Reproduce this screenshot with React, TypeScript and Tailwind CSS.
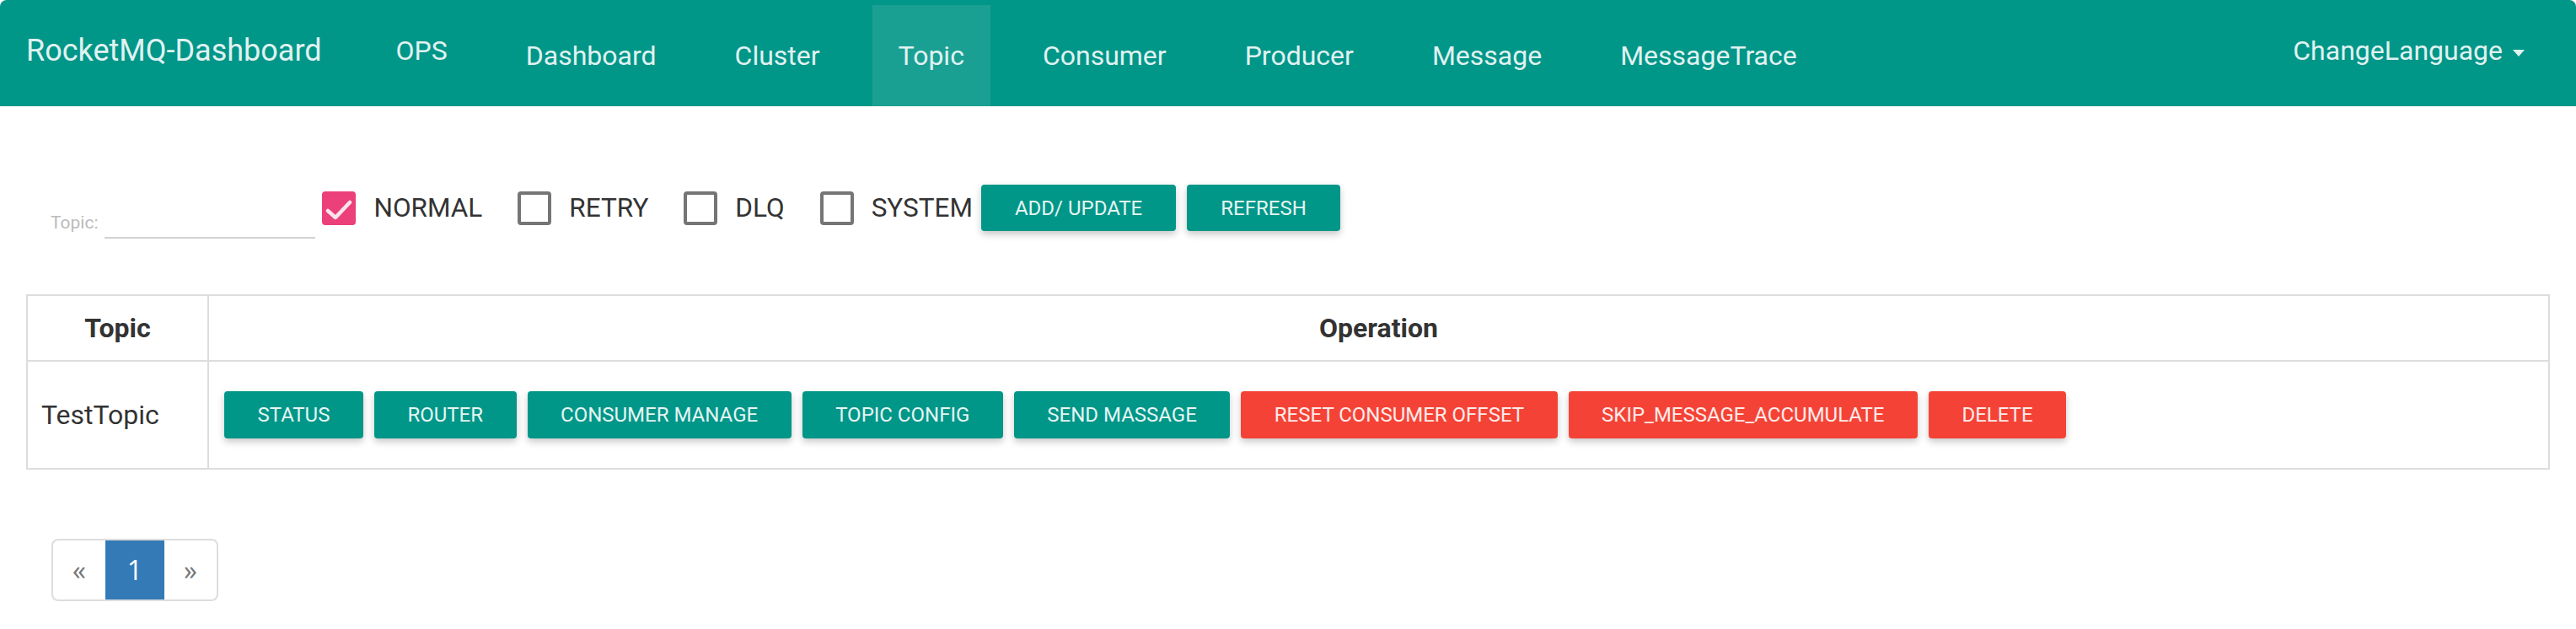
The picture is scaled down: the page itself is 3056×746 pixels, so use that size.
const navItems = ["Dashboard", "Cluster", "Topic", "Consumer", "Producer", "Message", "MessageTrace"];

const filters = [
  { label: "NORMAL", checked: true },
  { label: "RETRY", checked: false },
  { label: "DLQ", checked: false },
  { label: "SYSTEM", checked: false },
];

const ops = [
  { label: "STATUS", danger: false },
  { label: "ROUTER", danger: false },
  { label: "CONSUMER MANAGE", danger: false },
  { label: "TOPIC CONFIG", danger: false },
  { label: "SEND MASSAGE", danger: false },
  { label: "RESET CONSUMER OFFSET", danger: true },
  { label: "SKIP_MESSAGE_ACCUMULATE", danger: true },
  { label: "DELETE", danger: true },
];

const Navbar = () => {
  return (
    <nav className="flex h-[126px] bg-[#009688] rounded-t-[8px] text-[#e0f2f1]">
      <a className="px-[31px] pt-[40px] text-[36px] leading-[40px]">RocketMQ-Dashboard</a>
      <ul className="flex gap-[31px] ml-[26px]">
        <li className="px-[31px] pt-[40px] text-[32px] leading-[40px]">OPS</li>
        {navItems.map((item) => (
          <li
            key={item}
            className={
              item === "Topic"
                ? "mt-[6px] h-[120px] px-[31px] pt-[40px] text-[32px] leading-[40px] bg-[#1aa093]"
                : "mt-[6px] h-[120px] px-[31px] pt-[40px] text-[32px] leading-[40px]"
            }
          >
            {item}
          </li>
        ))}
      </ul>
      <div className="ml-auto mr-[30px] px-[31px] pt-[40px] flex items-start text-[32px] leading-[40px]">
        <span>ChangeLanguage</span>
        <span className="ml-[12px] mt-[19px] w-0 h-0 border-t-[8px] border-x-[7px] border-x-transparent border-t-[#e0f2f1]" />
      </div>
    </nav>
  );
};

const Checkbox = ({ label, checked, last }: { label: string; checked: boolean; last: boolean }) => {
  return (
    <label className={last ? "flex items-center h-[55px] mr-[10px]" : "flex items-center h-[55px] mr-[42px]"}>
      {checked ? (
        <span className="w-[40px] h-[40px] rounded-[4px] bg-[#ec407a] flex items-center justify-center">
          <svg width="40" height="40" viewBox="0 0 40 40">
            <polyline points="7,23 16,31 33,13" fill="none" stroke="#fde4ec" strokeWidth="4.5" strokeLinecap="round" strokeLinejoin="round" />
          </svg>
        </span>
      ) : (
        <span className="w-[40px] h-[40px] rounded-[4px] border-[4px] border-[#757575]" />
      )}
      <span className="ml-[21px] text-[31.5px] text-[#333]">{label}</span>
    </label>
  );
};

const Btn = ({ label, danger, h }: { label: string; danger?: boolean; h: string }) => {
  return (
    <button
      className={
        (danger ? "bg-[#f44336] " : "bg-[#009688] ") +
        h +
        " inline-flex items-center rounded-[4px] text-[24px] text-white/90 shadow-[0_4px_8px_rgba(0,0,0,0.22)]"
      }
    >
      {label}
    </button>
  );
};

export default function App() {
  return (
    <div className="w-[3056px] h-[746px] bg-white font-['Roboto'] overflow-hidden">
      <Navbar />
      <div className="px-[31px]">
        <div className="flex items-start mt-[93px]">
          <div className="flex items-end h-[64px]">
            <span className="text-[21px] leading-[26px] pb-[6px] text-[#bbb] ml-[29px]">Topic:</span>
            <span className="ml-[8px] w-[250px] h-[40px] border-b-2 border-[#d2d2d2]" />
          </div>
          <div className="flex items-start ml-[8px]">
            {filters.map((f, i) => (
              <Checkbox key={f.label} label={f.label} checked={f.checked} last={i === filters.length - 1} />
            ))}
            <div className="flex gap-[13px]">
              <Btn label="ADD/ UPDATE" h="h-[55px] px-[40px]" />
              <Btn label="REFRESH" h="h-[55px] px-[40px]" />
            </div>
          </div>
        </div>

        <div className="mt-[66px] border-2 border-[#ddd] text-[32px] text-[#333]">
          <div className="flex h-[78px] border-b-2 border-[#ddd] font-bold">
            <div className="w-[215px] border-r-2 border-[#ddd] flex items-center justify-center">Topic</div>
            <div className="flex-1 flex items-center justify-center">Operation</div>
          </div>
          <div className="flex h-[126px]">
            <div className="w-[215px] border-r-2 border-[#ddd] flex items-center px-[16px]">TestTopic</div>
            <div className="flex-1 flex items-center gap-[13px] px-[18px]">
              {ops.map((o) => (
                <Btn key={o.label} label={o.label} danger={o.danger} h="h-[56px] px-[39.5px]" />
              ))}
            </div>
          </div>
        </div>

        <div className="mt-[82px] ml-[30px] inline-flex border-2 border-[#ddd] rounded-[8px] overflow-hidden font-['Open_Sans'] text-[32px] leading-[46px]">
          <span className="w-[62px] flex items-center justify-center py-[12px] text-[#777]">«</span>
          <span className="w-[70px] flex items-center justify-center py-[12px] bg-[#337ab7] text-white">1</span>
          <span className="w-[62px] flex items-center justify-center py-[12px] text-[#777]">»</span>
        </div>
      </div>
    </div>
  );
}
